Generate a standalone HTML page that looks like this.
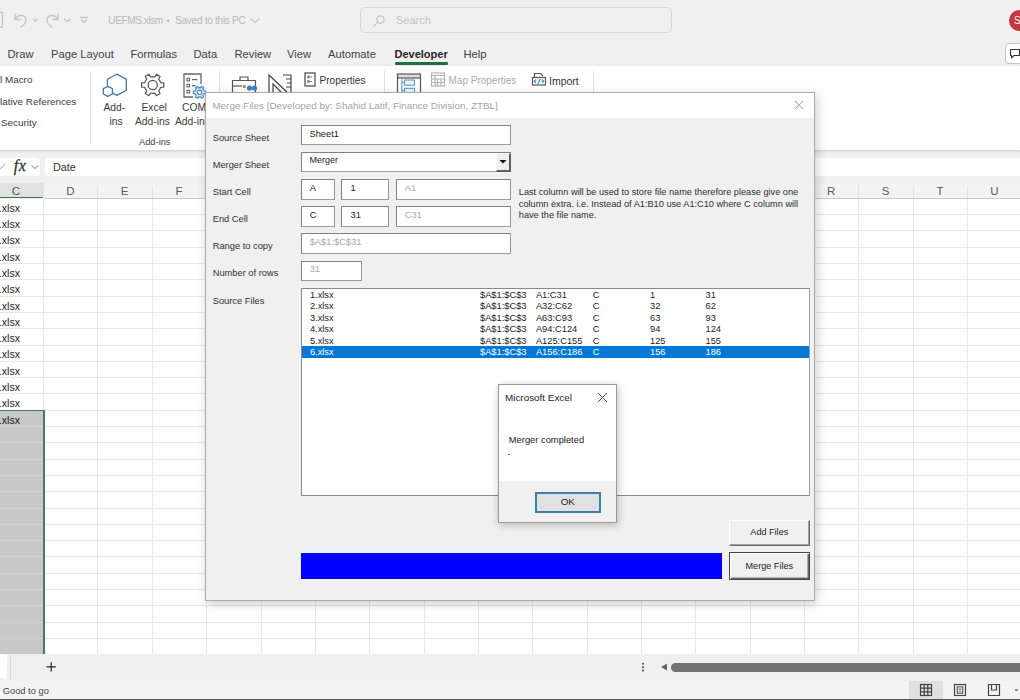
<!DOCTYPE html>
<html><head><meta charset="utf-8"><title>Excel</title><style>
*{margin:0;padding:0;box-sizing:border-box}
html,body{width:1020px;height:700px;overflow:hidden}
body{position:relative;background:#f0f0f0;font-family:"Liberation Sans",sans-serif}
.a{position:absolute;white-space:nowrap}
svg.a{overflow:visible}
</style></head><body>
<svg class="a" style="left:0px;top:0px" width="100" height="40" viewBox="0 0 100 40">
<g fill="none" stroke="#c4c4c4" stroke-width="1.3" stroke-linecap="round" stroke-linejoin="round">
<path d="M-3 12.5 H2.5 V27 H-3"/>
<path d="M15 14 V19.5 H20.5"/><path d="M15.5 19 C18 14.5 25 14 26 19.5 C26.8 23 23.5 25 21 27"/>
<path d="M33.5 19.3 L35.3 21 L37.1 19.3"/>
<path d="M58 14 V19.5 H52.5"/><path d="M57.5 19 C55 14.5 48 14 47 19.5 C46.2 23 49.5 25 52 27"/>
<path d="M64.5 19.3 L67.5 21.5 L70.5 19.3"/>
<path d="M80.5 17.5 H87.5"/><path d="M81.5 20 L84 22.5 L86.5 20"/>
</g></svg>
<div class="a" style="left:108.3px;top:10.60px;line-height:20px;font-size:10.2px;color:#b9b9b9;font-weight:normal;letter-spacing:-0.5px">UEFMS.xlsm</div>
<div class="a" style="left:166.5px;top:10.60px;line-height:20px;font-size:9.6px;color:#b9b9b9;font-weight:normal;">•</div>
<div class="a" style="left:175px;top:10.60px;line-height:20px;font-size:10.2px;color:#b9b9b9;font-weight:normal;letter-spacing:-0.33px">Saved to this PC</div>
<svg class="a" style="left:248px;top:14px" width="14" height="12"><path d="M2.5 4.5 L7 8.5 L11.5 4.5" fill="none" stroke="#c4c4c4" stroke-width="1.2"/></svg>
<div class="a" style="left:360px;top:7px;width:312px;height:26px;border:1px solid #d9d9d9;border-radius:4px;background:#f0f0f0"></div>
<svg class="a" style="left:370px;top:12px" width="18" height="18"><g fill="none" stroke="#c2c2c2" stroke-width="1.2"><circle cx="10.5" cy="7.5" r="3.6"/><path d="M7.8 10.2 L3.5 14.5"/></g></svg>
<div class="a" style="left:396px;top:10.00px;line-height:20px;font-size:11px;color:#c4c4c4;font-weight:normal;">Search</div>
<div class="a" style="left:1009px;top:10px;width:21px;height:21px;border-radius:50%;background:#c8373e"></div>
<div class="a" style="left:1014px;top:10.50px;line-height:20px;font-size:10px;color:#fff;font-weight:normal;">S</div>
<div class="a" style="left:7.5px;top:43.80px;line-height:20px;font-size:11.2px;color:#424242;font-weight:normal;">Draw</div>
<div class="a" style="left:51px;top:43.80px;line-height:20px;font-size:11.2px;color:#424242;font-weight:normal;">Page Layout</div>
<div class="a" style="left:130.5px;top:43.80px;line-height:20px;font-size:11.2px;color:#424242;font-weight:normal;">Formulas</div>
<div class="a" style="left:193.5px;top:43.80px;line-height:20px;font-size:11.2px;color:#424242;font-weight:normal;">Data</div>
<div class="a" style="left:234.5px;top:43.80px;line-height:20px;font-size:11.2px;color:#424242;font-weight:normal;">Review</div>
<div class="a" style="left:287px;top:43.80px;line-height:20px;font-size:11.2px;color:#424242;font-weight:normal;">View</div>
<div class="a" style="left:328px;top:43.80px;line-height:20px;font-size:11.2px;color:#424242;font-weight:normal;">Automate</div>
<div class="a" style="left:463.5px;top:43.80px;line-height:20px;font-size:11.2px;color:#424242;font-weight:normal;">Help</div>
<div class="a" style="left:394.5px;top:43.80px;line-height:20px;font-size:11.0px;color:#262626;font-weight:bold;">Developer</div>
<div class="a" style="left:395px;top:62px;width:53px;height:2.5px;background:#1e6e42;border-radius:1px"></div>
<div class="a" style="left:1005px;top:43px;width:30px;height:21px;border:1px solid #c4c4c4;border-radius:4px;background:#fff"></div>
<svg class="a" style="left:1008px;top:46px" width="14" height="14"><path d="M2.5 3.5 H11.5 V9.5 H6 L3.5 11.8 V9.5 H2.5 Z" fill="none" stroke="#333" stroke-width="1.1" stroke-linejoin="round"/></svg>
<div class="a" style="left:0px;top:66px;width:1020px;height:84px;background:#fff;box-shadow:0 1px 3px rgba(0,0,0,0.16)"></div>
<div class="a" style="left:0px;top:70.00px;line-height:20px;font-size:9.9px;color:#3c3c3c;font-weight:normal;">l Macro</div>
<div class="a" style="left:0px;top:91.50px;line-height:20px;font-size:9.9px;color:#3c3c3c;font-weight:normal;">lative References</div>
<div class="a" style="left:1px;top:113.00px;line-height:20px;font-size:9.9px;color:#3c3c3c;font-weight:normal;">Security</div>
<div class="a" style="left:90px;top:71px;width:1px;height:73px;background:#e1e1e1"></div>
<svg class="a" style="left:98px;top:70px" width="34" height="30"><g fill="none" stroke="#4579ab" stroke-width="1.3" stroke-linejoin="round">
<path d="M14.4 23 L18.7 25.4 L28.3 20.4 V9.2 L18.7 4.2 L9.4 9.2 V15.8"/>
<path d="M9.8 16.3 L14.4 18.6 V24 L9.8 26.3 L5.3 24 V18.6 Z"/>
</g></svg>
<div class="a" style="left:103.5px;top:98.00px;line-height:20px;font-size:10.3px;color:#3c3c3c;font-weight:normal;">Add-</div>
<div class="a" style="left:109.5px;top:111.50px;line-height:20px;font-size:10.3px;color:#3c3c3c;font-weight:normal;">ins</div>
<svg class="a" style="left:136px;top:68px" width="34" height="34"><g fill="none" stroke="#555" stroke-width="1.2" stroke-linejoin="round">
<path d="M24.13 13.31 L24.69 14.77 L27.80 14.88 L27.80 19.12 L24.69 19.23 L23.61 21.59 L22.63 22.81 L24.08 25.55 L20.42 27.67 L18.76 25.04 L16.18 25.28 L14.64 25.04 L12.98 27.67 L9.32 25.55 L10.77 22.81 L9.27 20.69 L8.71 19.23 L5.60 19.12 L5.60 14.88 L8.71 14.77 L9.79 12.41 L10.77 11.19 L9.32 8.45 L12.98 6.33 L14.64 8.96 L17.22 8.72 L18.76 8.96 L20.42 6.33 L24.08 8.45 L22.63 11.19 Z"/>
<circle cx="16.7" cy="17" r="4.6"/></g></svg>
<div class="a" style="left:141.5px;top:98.00px;line-height:20px;font-size:10.3px;color:#3c3c3c;font-weight:normal;">Excel</div>
<div class="a" style="left:135px;top:111.50px;line-height:20px;font-size:10.3px;color:#3c3c3c;font-weight:normal;">Add-ins</div>
<svg class="a" style="left:180px;top:70px" width="32" height="32"><g fill="none" stroke="#666" stroke-width="1.3">
<path d="M13 27 H4 V4 H21 V14"/>
<rect x="7" y="8.3" width="2.6" height="2.6" stroke-width="1.1"/><rect x="7" y="14.3" width="2.6" height="2.6" stroke-width="1.1"/><rect x="7" y="20.3" width="2.6" height="2.6" stroke-width="1.1"/>
<path d="M12 9.6 H17.5 M12 15.6 H15.5" stroke-width="1.1"/></g>
<g stroke="#4a8ac9" stroke-width="1.2" stroke-linejoin="round"><path d="M23.62 20.25 L23.92 21.02 L25.68 21.05 L25.68 23.55 L23.92 23.58 L23.33 24.85 L22.82 25.48 L23.67 27.03 L21.51 28.27 L20.60 26.77 L19.21 26.89 L18.40 26.77 L17.49 28.27 L15.33 27.03 L16.18 25.48 L15.38 24.35 L15.08 23.58 L13.32 23.55 L13.32 21.05 L15.08 21.02 L15.67 19.75 L16.18 19.12 L15.33 17.57 L17.49 16.33 L18.40 17.83 L19.79 17.71 L20.60 17.83 L21.51 16.33 L23.67 17.57 L22.82 19.12 Z" fill="#dcebf8"/><circle cx="19.5" cy="22.3" r="2.2" fill="#fff"/></g></svg>
<div class="a" style="left:182px;top:98.00px;line-height:20px;font-size:10.3px;color:#3c3c3c;font-weight:normal;">COM</div>
<div class="a" style="left:175px;top:111.50px;line-height:20px;font-size:10.3px;color:#3c3c3c;font-weight:normal;">Add-ins</div>
<div class="a" style="left:139px;top:132.00px;line-height:20px;font-size:9.3px;color:#444;font-weight:normal;">Add-ins</div>
<div class="a" style="left:219px;top:71px;width:1px;height:73px;background:#e1e1e1"></div>
<svg class="a" style="left:230px;top:74px" width="30" height="22"><g fill="none" stroke="#555" stroke-width="1.2">
<path d="M2.5 6.5 H25.5 V21 H2.5 Z"/><path d="M10 6.5 V3 H18 V6.5"/><path d="M2.5 12 H12"/></g>
<g fill="#3b82c4"><circle cx="19.5" cy="14" r="2.6"/><circle cx="24.5" cy="14" r="2.6"/></g><rect x="13" y="11" width="2.5" height="3" fill="#d87b29"/></svg>
<svg class="a" style="left:266px;top:72px" width="30" height="24"><g fill="none" stroke="#444" stroke-width="1.2">
<path d="M3 3 L25 24 H3 Z"/><path d="M7 12 L16 21 H7 Z"/><path d="M17 3 H25 V24"/><path d="M20 7 H25 M21 11 H25 M20 15 H25"/></g></svg>
<svg class="a" style="left:303px;top:71px" width="14" height="17"><rect x="2" y="2" width="10" height="13" fill="none" stroke="#555" stroke-width="1.3"/><rect x="4.3" y="4.6" width="2.4" height="2.6" fill="#777"/><rect x="4.3" y="9.2" width="2.4" height="2.6" fill="#777"/><path d="M7.5 5.9 H9 M7.5 10.5 H9" stroke="#666" stroke-width="1"/></svg>
<div class="a" style="left:319.5px;top:70.80px;line-height:20px;font-size:10.1px;color:#333;font-weight:normal;">Properties</div>
<div class="a" style="left:384px;top:71px;width:1px;height:73px;background:#e1e1e1"></div>
<svg class="a" style="left:396px;top:72px" width="26" height="24"><rect x="1.5" y="2" width="23" height="4" fill="#ddd" stroke="#555" stroke-width="1.2"/><path d="M1.5 24 V6 M24.5 6 V24" stroke="#555" stroke-width="1.2" fill="none"/>
<g fill="none" stroke="#5a9bd5" stroke-width="1.1"><path d="M5.8 6.5 V24 M5.8 10.5 H8.5 M5.8 18.8 H8.5"/><rect x="8.5" y="8" width="10" height="5.2" fill="#eaf3fc"/><rect x="8.5" y="16.3" width="10" height="5.2" fill="#eaf3fc"/></g></svg>
<svg class="a" style="left:430px;top:71px" width="17" height="17"><g fill="none" stroke="#b0b0b0" stroke-width="1.1"><rect x="1.5" y="2" width="13" height="13"/><path d="M1.5 4.5 H14.5 M1.5 8 H14.5 M1.5 11.5 H7 M5 4.5 V15 M7.5 8 V15 M11 8 V15 M7.5 11.5 H14.5"/></g></svg>
<div class="a" style="left:448.5px;top:70.80px;line-height:20px;font-size:10.0px;color:#aaaaaa;font-weight:normal;">Map Properties</div>
<svg class="a" style="left:530px;top:70px" width="18" height="18"><g fill="none" stroke="#555" stroke-width="1.2"><path d="M4.5 7 V3.5 H10.5 L13 6"/><rect x="2.5" y="7.5" width="13" height="7.5"/></g><g fill="none" stroke="#3d85c6" stroke-width="1.2"><path d="M6 9.5 L4.3 11.2 L6 12.9 M12 9.5 L13.7 11.2 L12 12.9 M7.5 14.5 L10.5 9"/></g></svg>
<div class="a" style="left:549px;top:70.80px;line-height:20px;font-size:10.5px;color:#333;font-weight:normal;">Import</div>
<div class="a" style="left:593px;top:71px;width:1px;height:73px;background:#e1e1e1"></div>
<div class="a" style="left:0px;top:158px;width:40px;height:18px;background:#fff;border-radius:0 4px 4px 0"></div>
<svg class="a" style="left:0px;top:160px" width="8" height="14"><path d="M-1 10 L5 4" stroke="#bbb" stroke-width="1.1"/></svg>
<div class="a" style="left:13.8px;top:156.30px;line-height:20px;font-size:16px;color:#333;font-weight:normal;font-family:'Liberation Serif',serif;font-style:italic;letter-spacing:0.6px;-webkit-text-stroke:0.3px #333">fx</div>
<svg class="a" style="left:29px;top:162px" width="12" height="10"><path d="M2.5 3.5 L6 6.5 L9.5 3.5" fill="none" stroke="#aaa" stroke-width="1.1"/></svg>
<div class="a" style="left:45px;top:158px;width:1000px;height:18px;background:#fff;border-radius:4px"></div>
<div class="a" style="left:53px;top:157.00px;line-height:20px;font-size:10.8px;color:#333;font-weight:normal;">Date</div>
<div class="a" style="left:0px;top:183px;width:1020px;height:15px;background:#f3f3f3"></div>
<div class="a" style="left:0px;top:183px;width:43.6px;height:15px;background:#e1e1e1"></div>
<div class="a" style="left:0px;top:196.6px;width:43.6px;height:1.6px;background:#3a7656"></div>
<div class="a" style="left:43.6px;top:197.5px;width:1000px;height:1px;background:#c8c8c8"></div>
<div class="a" style="left:1.00px;top:180.5px;width:30px;text-align:center;line-height:20px;font-size:11.5px;color:#2f6f4e">C</div>
<div class="a" style="left:55.35px;top:180.5px;width:30px;text-align:center;line-height:20px;font-size:11.5px;color:#5a5a5a">D</div>
<div class="a" style="left:43px;top:186px;width:1px;height:12px;background:#e2e2e2"></div>
<div class="a" style="left:109.70px;top:180.5px;width:30px;text-align:center;line-height:20px;font-size:11.5px;color:#5a5a5a">E</div>
<div class="a" style="left:97px;top:186px;width:1px;height:12px;background:#e2e2e2"></div>
<div class="a" style="left:164.05px;top:180.5px;width:30px;text-align:center;line-height:20px;font-size:11.5px;color:#5a5a5a">F</div>
<div class="a" style="left:152px;top:186px;width:1px;height:12px;background:#e2e2e2"></div>
<div class="a" style="left:218.40px;top:180.5px;width:30px;text-align:center;line-height:20px;font-size:11.5px;color:#5a5a5a">G</div>
<div class="a" style="left:206px;top:186px;width:1px;height:12px;background:#e2e2e2"></div>
<div class="a" style="left:272.75px;top:180.5px;width:30px;text-align:center;line-height:20px;font-size:11.5px;color:#5a5a5a">H</div>
<div class="a" style="left:261px;top:186px;width:1px;height:12px;background:#e2e2e2"></div>
<div class="a" style="left:327.10px;top:180.5px;width:30px;text-align:center;line-height:20px;font-size:11.5px;color:#5a5a5a">I</div>
<div class="a" style="left:315px;top:186px;width:1px;height:12px;background:#e2e2e2"></div>
<div class="a" style="left:381.45px;top:180.5px;width:30px;text-align:center;line-height:20px;font-size:11.5px;color:#5a5a5a">J</div>
<div class="a" style="left:369px;top:186px;width:1px;height:12px;background:#e2e2e2"></div>
<div class="a" style="left:435.80px;top:180.5px;width:30px;text-align:center;line-height:20px;font-size:11.5px;color:#5a5a5a">K</div>
<div class="a" style="left:424px;top:186px;width:1px;height:12px;background:#e2e2e2"></div>
<div class="a" style="left:490.15px;top:180.5px;width:30px;text-align:center;line-height:20px;font-size:11.5px;color:#5a5a5a">L</div>
<div class="a" style="left:478px;top:186px;width:1px;height:12px;background:#e2e2e2"></div>
<div class="a" style="left:544.50px;top:180.5px;width:30px;text-align:center;line-height:20px;font-size:11.5px;color:#5a5a5a">M</div>
<div class="a" style="left:532px;top:186px;width:1px;height:12px;background:#e2e2e2"></div>
<div class="a" style="left:598.85px;top:180.5px;width:30px;text-align:center;line-height:20px;font-size:11.5px;color:#5a5a5a">N</div>
<div class="a" style="left:587px;top:186px;width:1px;height:12px;background:#e2e2e2"></div>
<div class="a" style="left:653.20px;top:180.5px;width:30px;text-align:center;line-height:20px;font-size:11.5px;color:#5a5a5a">O</div>
<div class="a" style="left:641px;top:186px;width:1px;height:12px;background:#e2e2e2"></div>
<div class="a" style="left:707.55px;top:180.5px;width:30px;text-align:center;line-height:20px;font-size:11.5px;color:#5a5a5a">P</div>
<div class="a" style="left:695px;top:186px;width:1px;height:12px;background:#e2e2e2"></div>
<div class="a" style="left:761.90px;top:180.5px;width:30px;text-align:center;line-height:20px;font-size:11.5px;color:#5a5a5a">Q</div>
<div class="a" style="left:750px;top:186px;width:1px;height:12px;background:#e2e2e2"></div>
<div class="a" style="left:816.25px;top:180.5px;width:30px;text-align:center;line-height:20px;font-size:11.5px;color:#5a5a5a">R</div>
<div class="a" style="left:804px;top:186px;width:1px;height:12px;background:#e2e2e2"></div>
<div class="a" style="left:870.60px;top:180.5px;width:30px;text-align:center;line-height:20px;font-size:11.5px;color:#5a5a5a">S</div>
<div class="a" style="left:858px;top:186px;width:1px;height:12px;background:#e2e2e2"></div>
<div class="a" style="left:924.95px;top:180.5px;width:30px;text-align:center;line-height:20px;font-size:11.5px;color:#5a5a5a">T</div>
<div class="a" style="left:913px;top:186px;width:1px;height:12px;background:#e2e2e2"></div>
<div class="a" style="left:979.30px;top:180.5px;width:30px;text-align:center;line-height:20px;font-size:11.5px;color:#5a5a5a">U</div>
<div class="a" style="left:967px;top:186px;width:1px;height:12px;background:#e2e2e2"></div>
<div class="a" style="left:1033.65px;top:180.5px;width:30px;text-align:center;line-height:20px;font-size:11.5px;color:#5a5a5a">V</div>
<div class="a" style="left:1021px;top:186px;width:1px;height:12px;background:#e2e2e2"></div>
<div class="a" style="left:0px;top:198.5px;width:1020px;height:455.5px;background:#fff"></div>
<div class="a" style="left:43px;top:198.5px;width:1px;height:455.5px;background:#e7e7e7"></div>
<div class="a" style="left:97px;top:198.5px;width:1px;height:455.5px;background:#e7e7e7"></div>
<div class="a" style="left:152px;top:198.5px;width:1px;height:455.5px;background:#e7e7e7"></div>
<div class="a" style="left:206px;top:198.5px;width:1px;height:455.5px;background:#e7e7e7"></div>
<div class="a" style="left:261px;top:198.5px;width:1px;height:455.5px;background:#e7e7e7"></div>
<div class="a" style="left:315px;top:198.5px;width:1px;height:455.5px;background:#e7e7e7"></div>
<div class="a" style="left:369px;top:198.5px;width:1px;height:455.5px;background:#e7e7e7"></div>
<div class="a" style="left:424px;top:198.5px;width:1px;height:455.5px;background:#e7e7e7"></div>
<div class="a" style="left:478px;top:198.5px;width:1px;height:455.5px;background:#e7e7e7"></div>
<div class="a" style="left:532px;top:198.5px;width:1px;height:455.5px;background:#e7e7e7"></div>
<div class="a" style="left:587px;top:198.5px;width:1px;height:455.5px;background:#e7e7e7"></div>
<div class="a" style="left:641px;top:198.5px;width:1px;height:455.5px;background:#e7e7e7"></div>
<div class="a" style="left:695px;top:198.5px;width:1px;height:455.5px;background:#e7e7e7"></div>
<div class="a" style="left:750px;top:198.5px;width:1px;height:455.5px;background:#e7e7e7"></div>
<div class="a" style="left:804px;top:198.5px;width:1px;height:455.5px;background:#e7e7e7"></div>
<div class="a" style="left:858px;top:198.5px;width:1px;height:455.5px;background:#e7e7e7"></div>
<div class="a" style="left:913px;top:198.5px;width:1px;height:455.5px;background:#e7e7e7"></div>
<div class="a" style="left:967px;top:198.5px;width:1px;height:455.5px;background:#e7e7e7"></div>
<div class="a" style="left:1021px;top:198.5px;width:1px;height:455.5px;background:#e7e7e7"></div>
<div class="a" style="left:1076px;top:198.5px;width:1px;height:455.5px;background:#e7e7e7"></div>
<div class="a" style="left:0px;top:214px;width:1020px;height:1px;background:#e7e7e7"></div>
<div class="a" style="left:0px;top:230px;width:1020px;height:1px;background:#e7e7e7"></div>
<div class="a" style="left:0px;top:247px;width:1020px;height:1px;background:#e7e7e7"></div>
<div class="a" style="left:0px;top:263px;width:1020px;height:1px;background:#e7e7e7"></div>
<div class="a" style="left:0px;top:279px;width:1020px;height:1px;background:#e7e7e7"></div>
<div class="a" style="left:0px;top:296px;width:1020px;height:1px;background:#e7e7e7"></div>
<div class="a" style="left:0px;top:312px;width:1020px;height:1px;background:#e7e7e7"></div>
<div class="a" style="left:0px;top:328px;width:1020px;height:1px;background:#e7e7e7"></div>
<div class="a" style="left:0px;top:345px;width:1020px;height:1px;background:#e7e7e7"></div>
<div class="a" style="left:0px;top:361px;width:1020px;height:1px;background:#e7e7e7"></div>
<div class="a" style="left:0px;top:377px;width:1020px;height:1px;background:#e7e7e7"></div>
<div class="a" style="left:0px;top:393px;width:1020px;height:1px;background:#e7e7e7"></div>
<div class="a" style="left:0px;top:410px;width:1020px;height:1px;background:#e7e7e7"></div>
<div class="a" style="left:0px;top:426px;width:1020px;height:1px;background:#e7e7e7"></div>
<div class="a" style="left:0px;top:442px;width:1020px;height:1px;background:#e7e7e7"></div>
<div class="a" style="left:0px;top:459px;width:1020px;height:1px;background:#e7e7e7"></div>
<div class="a" style="left:0px;top:475px;width:1020px;height:1px;background:#e7e7e7"></div>
<div class="a" style="left:0px;top:491px;width:1020px;height:1px;background:#e7e7e7"></div>
<div class="a" style="left:0px;top:508px;width:1020px;height:1px;background:#e7e7e7"></div>
<div class="a" style="left:0px;top:524px;width:1020px;height:1px;background:#e7e7e7"></div>
<div class="a" style="left:0px;top:540px;width:1020px;height:1px;background:#e7e7e7"></div>
<div class="a" style="left:0px;top:556px;width:1020px;height:1px;background:#e7e7e7"></div>
<div class="a" style="left:0px;top:573px;width:1020px;height:1px;background:#e7e7e7"></div>
<div class="a" style="left:0px;top:589px;width:1020px;height:1px;background:#e7e7e7"></div>
<div class="a" style="left:0px;top:605px;width:1020px;height:1px;background:#e7e7e7"></div>
<div class="a" style="left:0px;top:622px;width:1020px;height:1px;background:#e7e7e7"></div>
<div class="a" style="left:0px;top:638px;width:1020px;height:1px;background:#e7e7e7"></div>
<div class="a" style="left:0px;top:410.2px;width:43.6px;height:243.8px;background:#c8c8c8"></div>
<div class="a" style="left:0px;top:426px;width:43px;height:1px;background:#d0d0d0"></div>
<div class="a" style="left:0px;top:442px;width:43px;height:1px;background:#d0d0d0"></div>
<div class="a" style="left:0px;top:459px;width:43px;height:1px;background:#d0d0d0"></div>
<div class="a" style="left:0px;top:475px;width:43px;height:1px;background:#d0d0d0"></div>
<div class="a" style="left:0px;top:491px;width:43px;height:1px;background:#d0d0d0"></div>
<div class="a" style="left:0px;top:508px;width:43px;height:1px;background:#d0d0d0"></div>
<div class="a" style="left:0px;top:524px;width:43px;height:1px;background:#d0d0d0"></div>
<div class="a" style="left:0px;top:540px;width:43px;height:1px;background:#d0d0d0"></div>
<div class="a" style="left:0px;top:556px;width:43px;height:1px;background:#d0d0d0"></div>
<div class="a" style="left:0px;top:573px;width:43px;height:1px;background:#d0d0d0"></div>
<div class="a" style="left:0px;top:589px;width:43px;height:1px;background:#d0d0d0"></div>
<div class="a" style="left:0px;top:605px;width:43px;height:1px;background:#d0d0d0"></div>
<div class="a" style="left:0px;top:622px;width:43px;height:1px;background:#d0d0d0"></div>
<div class="a" style="left:0px;top:638px;width:43px;height:1px;background:#d0d0d0"></div>
<div class="a" style="left:0px;top:409.6px;width:45px;height:1.6px;background:#457c60"></div>
<div class="a" style="left:43.2px;top:409.6px;width:1.8px;height:245px;background:#457c60"></div>
<div class="a" style="left:-1.2px;top:197.75px;line-height:20px;font-size:10.6px;color:#222;font-weight:normal;">.xlsx</div>
<div class="a" style="left:-1.2px;top:214.05px;line-height:20px;font-size:10.6px;color:#222;font-weight:normal;">.xlsx</div>
<div class="a" style="left:-1.2px;top:230.35px;line-height:20px;font-size:10.6px;color:#222;font-weight:normal;">.xlsx</div>
<div class="a" style="left:-1.2px;top:246.65px;line-height:20px;font-size:10.6px;color:#222;font-weight:normal;">.xlsx</div>
<div class="a" style="left:-1.2px;top:262.95px;line-height:20px;font-size:10.6px;color:#222;font-weight:normal;">.xlsx</div>
<div class="a" style="left:-1.2px;top:279.25px;line-height:20px;font-size:10.6px;color:#222;font-weight:normal;">.xlsx</div>
<div class="a" style="left:-1.2px;top:295.55px;line-height:20px;font-size:10.6px;color:#222;font-weight:normal;">.xlsx</div>
<div class="a" style="left:-1.2px;top:311.85px;line-height:20px;font-size:10.6px;color:#222;font-weight:normal;">.xlsx</div>
<div class="a" style="left:-1.2px;top:328.15px;line-height:20px;font-size:10.6px;color:#222;font-weight:normal;">.xlsx</div>
<div class="a" style="left:-1.2px;top:344.45px;line-height:20px;font-size:10.6px;color:#222;font-weight:normal;">.xlsx</div>
<div class="a" style="left:-1.2px;top:360.75px;line-height:20px;font-size:10.6px;color:#222;font-weight:normal;">.xlsx</div>
<div class="a" style="left:-1.2px;top:377.05px;line-height:20px;font-size:10.6px;color:#222;font-weight:normal;">.xlsx</div>
<div class="a" style="left:-1.2px;top:393.35px;line-height:20px;font-size:10.6px;color:#222;font-weight:normal;">.xlsx</div>
<div class="a" style="left:-1.2px;top:409.65px;line-height:20px;font-size:10.6px;color:#222;font-weight:normal;">.xlsx</div>
<div class="a" style="left:0px;top:654px;width:1020px;height:27px;background:#f0f0f0"></div>
<div class="a" style="left:0px;top:655px;width:7px;height:23px;background:#fff;border-radius:0 2px 2px 0"></div>
<div class="a" style="left:10px;top:656px;width:1px;height:23px;background:#d8d8d8"></div>
<svg class="a" style="left:44px;top:660px" width="14" height="14"><path d="M7.2 2.2 V11.5 M2.5 6.8 H11.8" stroke="#262626" stroke-width="1.2"/></svg>
<svg class="a" style="left:640px;top:661px" width="6" height="12"><g fill="#444"><circle cx="3" cy="2.8" r="1"/><circle cx="3" cy="6.2" r="1"/><circle cx="3" cy="9.6" r="1"/></g></svg>
<svg class="a" style="left:659px;top:662px" width="10" height="10"><path d="M2 5 L8 1.5 V8.5 Z" fill="#666"/></svg>
<div class="a" style="left:671px;top:663px;width:400px;height:8.5px;background:#737373;border-radius:4.5px"></div>
<div class="a" style="left:0px;top:681px;width:1020px;height:19px;background:#f3f3f3"></div>
<div class="a" style="left:2.8px;top:680.50px;line-height:20px;font-size:9.3px;color:#484848;font-weight:normal;">Good to go</div>
<div class="a" style="left:909px;top:681px;width:34px;height:18px;background:#e0e0e0"></div>
<svg class="a" style="left:918px;top:683px" width="100" height="15"><g fill="none" stroke="#444" stroke-width="1.2">
<rect x="2.5" y="1.5" width="11" height="11"/><path d="M6.2 1.5 V12.5 M9.8 1.5 V12.5 M2.5 5.2 H13.5 M2.5 8.8 H13.5"/>
<rect x="36.5" y="1.5" width="11" height="11"/><rect x="39.2" y="3.8" width="5.6" height="6.4" stroke-width="1"/><path d="M40.5 6 H43.5 M40.5 8 H43.5" stroke-width="0.8"/>
<path d="M70.5 1.5 H81.5 V12.5 H70.5 Z M73.5 1.5 V7 H78.5 V1.5"/>
<path d="M97 7 H100"/></g></svg>
<div class="a" style="left:0px;top:699px;width:1020px;height:1px;background:#555"></div>
<div class="a" style="left:205px;top:92.3px;width:609.5px;height:508.8px;background:#f0f0f0;border:1px solid #aaaaaa;box-shadow:2px 3px 10px rgba(0,0,0,0.20)"></div>
<div class="a" style="left:206px;top:93.3px;width:607.5px;height:24.5px;background:#fff"></div>
<div class="a" style="left:212.4px;top:96.00px;line-height:20px;font-size:9.9px;color:#a3a3a3;font-weight:normal;">Merge Files [Developed by: Shahid Latif, Finance Division, ZTBL]</div>
<svg class="a" style="left:793px;top:99px" width="12" height="12"><path d="M2 2 L10 10 M10 2 L2 10" stroke="#a6a6a6" stroke-width="1.05"/></svg>
<div class="a" style="left:212.7px;top:127.70px;line-height:20px;font-size:9.3px;color:#303030;font-weight:normal;">Source Sheet</div>
<div class="a" style="left:212.7px;top:154.90px;line-height:20px;font-size:9.3px;color:#303030;font-weight:normal;">Merger Sheet</div>
<div class="a" style="left:212.7px;top:182.00px;line-height:20px;font-size:9.3px;color:#303030;font-weight:normal;">Start Cell</div>
<div class="a" style="left:212.7px;top:209.00px;line-height:20px;font-size:9.3px;color:#303030;font-weight:normal;">End Cell</div>
<div class="a" style="left:212.7px;top:236.30px;line-height:20px;font-size:9.3px;color:#303030;font-weight:normal;">Range to copy</div>
<div class="a" style="left:212.7px;top:263.40px;line-height:20px;font-size:9.3px;color:#303030;font-weight:normal;">Number of rows</div>
<div class="a" style="left:212.7px;top:290.60px;line-height:20px;font-size:9.3px;color:#303030;font-weight:normal;">Source Files</div>
<div class="a" style="left:301.3px;top:125.1px;width:210.2px;height:20.2px;background:#fff;border-top:1.3px solid #828282;border-left:1.3px solid #828282;border-right:1.3px solid #979797;border-bottom:1.6px solid #9a9a9a"></div>
<div class="a" style="left:309.5px;top:123.50px;line-height:20px;font-size:9.3px;color:#222;font-weight:normal;">Sheet1</div>
<div class="a" style="left:301.3px;top:152.3px;width:210.2px;height:19.9px;background:#fff;border-top:1.3px solid #828282;border-left:1.3px solid #828282;border-right:1.3px solid #979797;border-bottom:1.6px solid #9a9a9a"></div>
<div class="a" style="left:309.5px;top:149.70px;line-height:20px;font-size:9.0px;color:#222;font-weight:normal;">Merger</div>
<div class="a" style="left:496.3px;top:153.3px;width:15px;height:18.9px;background:#efefef;border-right:2px solid #5e5e5e;border-bottom:2px solid #5e5e5e;border-top:1px solid #f8f8f8;border-left:1px solid #f8f8f8"></div>
<svg class="a" style="left:499px;top:159px" width="9" height="6"><path d="M0.5 1 H7.5 L4 4.5 Z" fill="#000"/></svg>
<div class="a" style="left:301.2px;top:179.3px;width:33.6px;height:20.4px;background:#fff;border-top:1.3px solid #828282;border-left:1.3px solid #828282;border-right:1.3px solid #979797;border-bottom:1.6px solid #9a9a9a"></div>
<div class="a" style="left:341.4px;top:179.3px;width:47.5px;height:20.4px;background:#fff;border-top:1.3px solid #828282;border-left:1.3px solid #828282;border-right:1.3px solid #979797;border-bottom:1.6px solid #9a9a9a"></div>
<div class="a" style="left:396.2px;top:179.3px;width:115px;height:20.4px;background:#fff;border-top:1.3px solid #828282;border-left:1.3px solid #828282;border-right:1.3px solid #979797;border-bottom:1.6px solid #9a9a9a"></div>
<div class="a" style="left:309.7px;top:177.70px;line-height:20px;font-size:9.3px;color:#222;font-weight:normal;">A</div>
<div class="a" style="left:350.5px;top:177.70px;line-height:20px;font-size:9.3px;color:#222;font-weight:normal;">1</div>
<div class="a" style="left:404.7px;top:177.70px;line-height:20px;font-size:9.3px;color:#a8a8a8;font-weight:normal;">A1</div>
<div class="a" style="left:301.2px;top:206.3px;width:33.6px;height:20.4px;background:#fff;border-top:1.3px solid #828282;border-left:1.3px solid #828282;border-right:1.3px solid #979797;border-bottom:1.6px solid #9a9a9a"></div>
<div class="a" style="left:341.4px;top:206.3px;width:47.5px;height:20.4px;background:#fff;border-top:1.3px solid #828282;border-left:1.3px solid #828282;border-right:1.3px solid #979797;border-bottom:1.6px solid #9a9a9a"></div>
<div class="a" style="left:396.2px;top:206.3px;width:115px;height:20.4px;background:#fff;border-top:1.3px solid #828282;border-left:1.3px solid #828282;border-right:1.3px solid #979797;border-bottom:1.6px solid #9a9a9a"></div>
<div class="a" style="left:309.7px;top:204.70px;line-height:20px;font-size:9.3px;color:#222;font-weight:normal;">C</div>
<div class="a" style="left:350.5px;top:204.70px;line-height:20px;font-size:9.3px;color:#222;font-weight:normal;">31</div>
<div class="a" style="left:404.7px;top:204.70px;line-height:20px;font-size:9.3px;color:#a8a8a8;font-weight:normal;">C31</div>
<div class="a" style="left:301.3px;top:233.4px;width:210px;height:20.3px;background:#fff;border-top:1.3px solid #828282;border-left:1.3px solid #828282;border-right:1.3px solid #979797;border-bottom:1.6px solid #9a9a9a"></div>
<div class="a" style="left:309.7px;top:231.70px;line-height:20px;font-size:9.3px;color:#a8a8a8;font-weight:normal;">$A$1:$C$31</div>
<div class="a" style="left:301.3px;top:260.5px;width:60.4px;height:20.1px;background:#fff;border-top:1.3px solid #828282;border-left:1.3px solid #828282;border-right:1.3px solid #979797;border-bottom:1.6px solid #9a9a9a"></div>
<div class="a" style="left:309.7px;top:258.80px;line-height:20px;font-size:9.3px;color:#a8a8a8;font-weight:normal;">31</div>
<div class="a" style="left:518.8px;top:182.30px;line-height:20px;font-size:9.2px;color:#2e2e2e;font-weight:normal;">Last column will be used to store file name therefore please give one</div>
<div class="a" style="left:518.8px;top:193.70px;line-height:20px;font-size:9.2px;color:#2e2e2e;font-weight:normal;">column extra. i.e. Instead of A1:B10 use A1:C10 where C column will</div>
<div class="a" style="left:518.8px;top:204.90px;line-height:20px;font-size:9.2px;color:#2e2e2e;font-weight:normal;">have the file name.</div>
<div class="a" style="left:301px;top:288px;width:508.8px;height:208.4px;background:#fff;border-top:1.2px solid #8a8a8a;border-left:1.2px solid #8a8a8a;border-right:1px solid #a6a6a6;border-bottom:1px solid #8a8a8a"></div>
<div class="a" style="left:309.9px;top:284.67px;line-height:20px;font-size:9.3px;color:#222;font-weight:normal;">1.xlsx</div>
<div class="a" style="left:480px;top:284.67px;width:47px;overflow:hidden;line-height:20px;font-size:9.3px;color:#222">$A$1:$C$31</div>
<div class="a" style="left:535.9px;top:284.67px;line-height:20px;font-size:9.3px;color:#222;font-weight:normal;">A1:C31</div>
<div class="a" style="left:592.8px;top:284.67px;line-height:20px;font-size:9.3px;color:#222;font-weight:normal;">C</div>
<div class="a" style="left:650px;top:284.67px;line-height:20px;font-size:9.3px;color:#222;font-weight:normal;">1</div>
<div class="a" style="left:705.5px;top:284.67px;line-height:20px;font-size:9.3px;color:#222;font-weight:normal;">31</div>
<div class="a" style="left:309.9px;top:296.22px;line-height:20px;font-size:9.3px;color:#222;font-weight:normal;">2.xlsx</div>
<div class="a" style="left:480px;top:296.22px;width:47px;overflow:hidden;line-height:20px;font-size:9.3px;color:#222">$A$1:$C$31</div>
<div class="a" style="left:535.9px;top:296.22px;line-height:20px;font-size:9.3px;color:#222;font-weight:normal;">A32:C62</div>
<div class="a" style="left:592.8px;top:296.22px;line-height:20px;font-size:9.3px;color:#222;font-weight:normal;">C</div>
<div class="a" style="left:650px;top:296.22px;line-height:20px;font-size:9.3px;color:#222;font-weight:normal;">32</div>
<div class="a" style="left:705.5px;top:296.22px;line-height:20px;font-size:9.3px;color:#222;font-weight:normal;">62</div>
<div class="a" style="left:309.9px;top:307.77px;line-height:20px;font-size:9.3px;color:#222;font-weight:normal;">3.xlsx</div>
<div class="a" style="left:480px;top:307.77px;width:47px;overflow:hidden;line-height:20px;font-size:9.3px;color:#222">$A$1:$C$31</div>
<div class="a" style="left:535.9px;top:307.77px;line-height:20px;font-size:9.3px;color:#222;font-weight:normal;">A63:C93</div>
<div class="a" style="left:592.8px;top:307.77px;line-height:20px;font-size:9.3px;color:#222;font-weight:normal;">C</div>
<div class="a" style="left:650px;top:307.77px;line-height:20px;font-size:9.3px;color:#222;font-weight:normal;">63</div>
<div class="a" style="left:705.5px;top:307.77px;line-height:20px;font-size:9.3px;color:#222;font-weight:normal;">93</div>
<div class="a" style="left:309.9px;top:319.32px;line-height:20px;font-size:9.3px;color:#222;font-weight:normal;">4.xlsx</div>
<div class="a" style="left:480px;top:319.32px;width:47px;overflow:hidden;line-height:20px;font-size:9.3px;color:#222">$A$1:$C$31</div>
<div class="a" style="left:535.9px;top:319.32px;line-height:20px;font-size:9.3px;color:#222;font-weight:normal;">A94:C124</div>
<div class="a" style="left:592.8px;top:319.32px;line-height:20px;font-size:9.3px;color:#222;font-weight:normal;">C</div>
<div class="a" style="left:650px;top:319.32px;line-height:20px;font-size:9.3px;color:#222;font-weight:normal;">94</div>
<div class="a" style="left:705.5px;top:319.32px;line-height:20px;font-size:9.3px;color:#222;font-weight:normal;">124</div>
<div class="a" style="left:309.9px;top:330.87px;line-height:20px;font-size:9.3px;color:#222;font-weight:normal;">5.xlsx</div>
<div class="a" style="left:480px;top:330.87px;width:47px;overflow:hidden;line-height:20px;font-size:9.3px;color:#222">$A$1:$C$31</div>
<div class="a" style="left:535.9px;top:330.87px;line-height:20px;font-size:9.3px;color:#222;font-weight:normal;">A125:C155</div>
<div class="a" style="left:592.8px;top:330.87px;line-height:20px;font-size:9.3px;color:#222;font-weight:normal;">C</div>
<div class="a" style="left:650px;top:330.87px;line-height:20px;font-size:9.3px;color:#222;font-weight:normal;">125</div>
<div class="a" style="left:705.5px;top:330.87px;line-height:20px;font-size:9.3px;color:#222;font-weight:normal;">155</div>
<div class="a" style="left:302.2px;top:346.35px;width:506.8px;height:11.7px;background:#0078d7"></div>
<div class="a" style="left:309.9px;top:342.42px;line-height:20px;font-size:9.3px;color:#fff;font-weight:normal;">6.xlsx</div>
<div class="a" style="left:480px;top:342.42px;width:47px;overflow:hidden;line-height:20px;font-size:9.3px;color:#fff">$A$1:$C$31</div>
<div class="a" style="left:535.9px;top:342.42px;line-height:20px;font-size:9.3px;color:#fff;font-weight:normal;">A156:C186</div>
<div class="a" style="left:592.8px;top:342.42px;line-height:20px;font-size:9.3px;color:#fff;font-weight:normal;">C</div>
<div class="a" style="left:650px;top:342.42px;line-height:20px;font-size:9.3px;color:#fff;font-weight:normal;">156</div>
<div class="a" style="left:705.5px;top:342.42px;line-height:20px;font-size:9.3px;color:#fff;font-weight:normal;">186</div>
<div class="a" style="left:729px;top:519.6px;width:80.6px;height:26px;background:#f0f0f0;border-top:1px solid #fff;border-left:1px solid #fff;border-right:1.5px solid #696969;border-bottom:1.5px solid #696969;box-shadow:inset -1px -1px 0 #a0a0a0"></div>
<div class="a" style="left:729px;top:532.4px;width:80.6px;text-align:center;line-height:0;font-size:9.1px;color:#222"><span style="position:relative;top:0">Add Files</span></div>
<div class="a" style="left:729px;top:552.4px;width:80.6px;height:27.2px;background:#f0f0f0;border:1px solid #444;box-shadow:inset 1px 1px 0 #fff, inset -1.5px -1.5px 0 #696969"></div>
<div class="a" style="left:729px;top:566.2px;width:80.6px;text-align:center;line-height:0;font-size:9.1px;color:#222">Merge Files</div>
<div class="a" style="left:301px;top:552.6px;width:420.6px;height:26.8px;background:#0000ff"></div>
<div class="a" style="left:498.4px;top:384.3px;width:118.4px;height:138.7px;background:#fff;border:1px solid #9a9a9a;box-shadow:1px 2px 8px rgba(0,0,0,0.25)"></div>
<div class="a" style="left:499.4px;top:481px;width:116.4px;height:41px;background:#f0f0f0"></div>
<div class="a" style="left:505px;top:387.60px;line-height:20px;font-size:9.9px;color:#222;font-weight:normal;">Microsoft Excel</div>
<svg class="a" style="left:597px;top:392px" width="11" height="11"><path d="M1 1 L10 10 M10 1 L1 10" stroke="#333" stroke-width="0.9"/></svg>
<div class="a" style="left:508.8px;top:429.70px;line-height:20px;font-size:9.35px;color:#222;font-weight:normal;">Merger completed</div>
<div class="a" style="left:508px;top:453.5px;width:1.7px;height:1.7px;background:#777"></div>
<div class="a" style="left:534.6px;top:491.5px;width:66.4px;height:21px;background:#e1e1e1;border:2px solid #3c7fb1"></div>
<div class="a" style="left:534.6px;top:502.3px;width:66.4px;text-align:center;line-height:0;font-size:9.8px;color:#222">OK</div>
</body></html>
